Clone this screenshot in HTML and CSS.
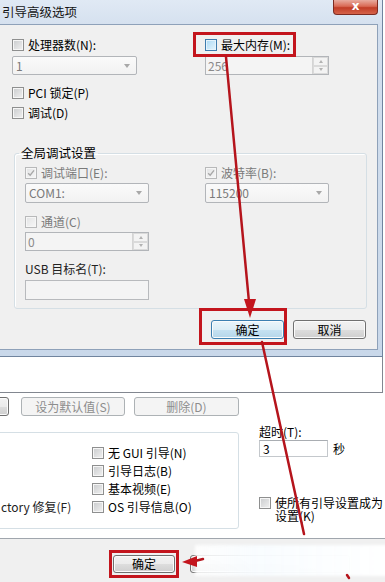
FILE: index.html
```html
<!DOCTYPE html>
<html lang="zh-CN">
<head>
<meta charset="utf-8">
<title>引导高级选项</title>
<link rel="stylesheet" href="styles.css">
</head>
<body>
<div class="screen">
  <div class="adv">
    <div class="titlebar">
      <span class="title">引导高级选项</span>
      <span class="close">x</span>
    </div>
    <div class="client">
      <div class="cols r1">
        <label class="chk"><span class="cb"></span>处理器数(N):</label>
        <label class="chk"><span class="cb hover"></span>最大内存(M):</label>
      </div>
      <div class="cols r2">
        <div class="combo"><span>1</span><i class="dd"></i></div>
        <div class="spin"><span>256</span><span class="sb"><i class="up"></i><i class="down"></i></span></div>
      </div>
      <label class="chk r3"><span class="cb"></span>PCI 锁定(P)</label>
      <label class="chk r4"><span class="cb"></span>调试(D)</label>
      <fieldset class="group">
        <legend>全局调试设置</legend>
        <div class="gcols g1">
          <label class="chk dis"><span class="cb off"><svg viewBox="0 0 12 12"><path d="M2.6 6.2 L5 8.6 L9.6 2.8"/></svg></span>调试端口(E):</label>
          <label class="chk dis"><span class="cb off"><svg viewBox="0 0 12 12"><path d="M2.6 6.2 L5 8.6 L9.6 2.8"/></svg></span>波特率(B):</label>
        </div>
        <div class="gcols g2">
          <div class="combo tall"><span>COM1:</span><i class="dd"></i></div>
          <div class="combo tall"><span>115200</span><i class="dd"></i></div>
        </div>
        <label class="chk dis g3"><span class="cb off"></span>通道(C)</label>
        <div class="spin g4"><span>0</span><span class="sb"><i class="up"></i><i class="down"></i></span></div>
        <div class="g5">USB 目标名(T):</div>
        <div class="tbox g6"></div>
      </fieldset>
      <div class="btns">
        <button class="btn focus">确定</button>
        <button class="btn">取消</button>
      </div>
    </div>
  </div>

  <div class="sys">
    <div class="listbox"></div>
    <div class="btnrow">
      <button class="btn part"></button>
      <button class="btn dis w1">设为默认值(S)</button>
      <button class="btn dis w2">删除(D)</button>
    </div>
    <div class="lower">
      <div class="bootgroup">
        <div class="opts">
          <span></span><label class="chk"><span class="cb"></span>无 GUI 引导(N)</label>
          <span></span><label class="chk"><span class="cb"></span>引导日志(B)</label>
          <span></span><label class="chk"><span class="cb"></span>基本视频(E)</label>
          <span class="cut">ctory 修复(F)</span><label class="chk"><span class="cb"></span>OS 引导信息(O)</label>
        </div>
      </div>
      <div class="timeout">
        <div class="tlabel">超时(T):</div>
        <div class="trow"><span class="tin">3</span><span>秒</span></div>
        <label class="chk2"><span class="cb"></span><span class="ctext">使所有引导设置成为<br>设置(K)</span></label>
      </div>
    </div>
  </div>

  <div class="bar">
    <button class="btn ok">确定</button>
    <button class="btn cancel"></button>
  </div>

  <div class="wash"></div>

  <svg class="annot" width="385" height="582" viewBox="0 0 385 582">
    <g fill="none" stroke="#c3151d" stroke-width="3">
      <rect x="194.5" y="33.5" width="100" height="22"/>
      <rect x="200.5" y="309.5" width="85" height="34"/>
      <rect x="110.5" y="551.5" width="67" height="25"/>
    </g>
    <g stroke="#b5141c" stroke-width="2.5" stroke-linecap="round">
      <line x1="226" y1="57" x2="249" y2="302"/>
      <line x1="262" y1="342" x2="304" y2="534"/>
      <line x1="195" y1="561" x2="203" y2="559"/>
      <line x1="347" y1="575" x2="349" y2="578"/>
    </g>
    <polygon fill="#c3151d" points="250,318 244,299 256,299"/>
    <polygon fill="#c3151d" points="182,562 197,556 197,567"/>
  </svg>
</div>
</body>
</html>
```
FILE: styles.css
```css
* { box-sizing: border-box; margin: 0; padding: 0; }
html, body { width: 385px; height: 582px; overflow: hidden; background: #fff; }
body { font-family: "Noto Sans CJK SC", "Noto Sans", sans-serif; font-size: 12px; color: #000; }

.screen { position: relative; width: 385px; height: 582px; overflow: hidden; }

/* ---------- advanced options dialog ---------- */
.adv {
  width: 383px; height: 357px;
  display: flex; flex-direction: column;
  background: linear-gradient(#e0e9f4, #d3dfee 30px, #c9d8ea);
  border-right: 1px solid #70849e; border-bottom: 1px solid #70849e;
}
.titlebar { height: 24px; display: flex; justify-content: space-between; align-items: flex-start; padding-right: 4px; }
.title { line-height: 23px; padding-left: 2px; font-size: 12.5px; color: #151515; }
.close {
  width: 45px; height: 15px;
  background: linear-gradient(#e8ab9f, #d96a55 45%, #c13d27 55%, #d5634a);
  border: 1px solid #7d2b21; border-top: none; border-radius: 0 0 4px 4px;
  color: #fff; font: bold 12px/13px "DejaVu Sans", sans-serif; text-align: center;
}
.client {
  width: 378px; height: 326px;
  background: #f0f0f0;
  border: 1px solid #8ea1b9; border-left: none;
  padding-left: 12px;
  display: flex; flex-direction: column;
}
.cols { display: grid; grid-template-columns: 193px 124px; }
.r1 { margin-top: 14px; }
.r2 { margin-top: 5px; }
.r2 .combo { width: 125px; }
.r3 { margin-top: 12px; }
.r4 { margin-top: 8px; }

/* checkbox */
.chk { display: flex; align-items: center; gap: 4px; height: 12px; line-height: 12px; white-space: nowrap; }
.chk.dis { color: #7a7a7a; }
.cb {
  flex: none; width: 12px; height: 12px;
  border: 1px solid #8e8f8f;
  background: linear-gradient(135deg, #c9cbcd, #f1f1f1);
  box-shadow: inset 0 0 0 1px #f6f6f6;
  display: flex; align-items: center; justify-content: center;
}
.cb.hover { border-color: #3d7bad; background: linear-gradient(135deg, #a9d8f4, #e6f5fd); box-shadow: inset 0 0 0 1px #e4f3fc; }
.cb.off { border-color: #b8b9ba; background: linear-gradient(135deg, #e2e3e4, #f7f7f7); }
.cb svg { width: 12px; height: 12px; }
.cb svg path { fill: none; stroke: #a7a7a7; stroke-width: 1.6; }

/* combo / spin / text boxes */
.combo {
  width: 124px; height: 19px; border: 1px solid #b2b5b9; border-radius: 2px;
  background: linear-gradient(#fafafa, #f2f2f2);
  display: flex; align-items: center; justify-content: space-between;
  padding: 0 6px 0 3px; color: #7a7a7a; line-height: 12px;
}
.combo.tall { height: 20px; }
.dd { width: 0; height: 0; border-left: 3.5px solid transparent; border-right: 3.5px solid transparent; border-top: 4px solid #a8a8a8; }
.spin {
  width: 124px; height: 19px; border: 1px solid #b2b5b9;
  background: #f4f4f4; display: flex; align-items: stretch; justify-content: space-between;
  color: #8a8a8a; line-height: 17px;
}
.spin > span:first-child { padding-left: 2px; }
.sb { width: 16px; display: flex; flex-direction: column; border-left: 1px solid #d4d4d4; }
.sb i { flex: 1; display: flex; align-items: center; justify-content: center; border: 1px solid #dadada; background: #f3f3f3; }
.sb i::after { content: ""; width: 0; height: 0; border-left: 2.5px solid transparent; border-right: 2.5px solid transparent; }
.sb .up::after { border-bottom: 3px solid #b2b2b2; }
.sb .down::after { border-top: 3px solid #b2b2b2; }
.tbox { width: 124px; height: 20px; border: 1px solid #b8babd; background: #f4f4f4; }

/* group */
.group {
  margin-top: 27px; margin-left: 2px; width: 353px;
  border: 1px solid #d5dfe5; border-radius: 3px;
  padding: 0 0 8px 10px;
  display: flex; flex-direction: column;
  box-shadow: 1px 1px 0 #fff inset;
}
.group legend { margin-left: -6px; padding: 0 2px; line-height: 14px; font-size: 12.5px; }
.gcols { display: grid; grid-template-columns: 124px 124px; column-gap: 56px; }
.g1 { margin-top: 7px; }
.g2 { margin-top: 4px; }
.g3 { margin-top: 13px; }
.g4 { margin-top: 4px; }
.g5 { margin-top: 11px; line-height: 14px; color: #222; }
.g6 { margin-top: 4px; }

/* buttons */
.btn {
  appearance: none; font: 12px/1 "Noto Sans CJK SC", sans-serif; color: #000;
  height: 19px; border: 1px solid #707070; border-radius: 3px;
  background: linear-gradient(#f2f2f2, #ebebeb 50%, #dddddd 51%, #cfcfcf);
  box-shadow: inset 0 0 0 1px #fbfbfb;
  display: flex; align-items: center; justify-content: center; padding: 0;
}
.btn.focus { border-color: #3c7fb1; background: linear-gradient(#eaf5fb, #dcedf6 50%, #c6e2f2 51%, #b5d6ea); }
.btn.dis { border-color: #adb2b5; background: #f4f4f4; color: #8d8d8d; box-shadow: none; }
.btns { margin-top: 11px; display: flex; justify-content: flex-end; gap: 9px; padding-right: 11px; }
.btns .btn { width: 73px; }

/* ---------- system configuration (behind) ---------- */
.sys { height: 182px; background: #fff; border-bottom: 1px solid #a0a6ad; display: flex; flex-direction: column; }
.listbox { height: 36px; width: 383px; border-bottom: 1px solid #828790; border-right: 1px solid #828790; }
.btnrow { margin-top: 4px; display: flex; height: 19px; }
.btnrow .part { flex: none; width: 80px; margin-left: -71px; }
.btnrow .w1 { flex: none; width: 104px; margin-left: 12px; }
.btnrow .w2 { flex: none; width: 105px; margin-left: 9px; }
.lower { display: flex; align-items: flex-start; }
.bootgroup {
  flex: none;
  margin-top: 16px; margin-left: -11px; width: 250px; height: 97px;
  border: 1px solid #d5dfe5; border-radius: 3px;
  padding: 14px 0 0 11px;
}
.opts { display: grid; grid-template-columns: 91px auto; row-gap: 6px; }
.cut { line-height: 12px; white-space: nowrap; color: #222; }
.timeout { flex: none; margin-left: 20px; margin-top: 9px; display: flex; flex-direction: column; }
.tlabel { line-height: 14px; }
.trow { margin-top: 1px; display: flex; align-items: center; gap: 5px; }
.tin { width: 69px; height: 17px; border: 1px solid #c4c8cc; border-top-color: #a9adb2; padding-left: 3px; line-height: 15px; }
.chk2 { margin-top: 39px; display: flex; align-items: flex-start; gap: 4px; line-height: 13px; white-space: nowrap; }
.chk2 .cb { margin-top: 1px; }

.bar { height: 43px; background: #f0f0f0; display: flex; padding: 16px 0 0 113px; }
.bar .btn { flex: none; height: 18px; width: 62px; }
.bar .cancel { margin-left: 15px; width: 160px; }

/* ---------- overlays: washed-out corner + red annotations ---------- */
.wash {
  position: absolute; left: 195px; top: 545px; width: 200px; height: 31px;
  background: linear-gradient(90deg, rgba(255,255,255,.85), rgba(248,252,255,.97) 30%, #fff);
  filter: blur(1.5px);
}
.annot { position: absolute; left: 0; top: 0; pointer-events: none; }
```
